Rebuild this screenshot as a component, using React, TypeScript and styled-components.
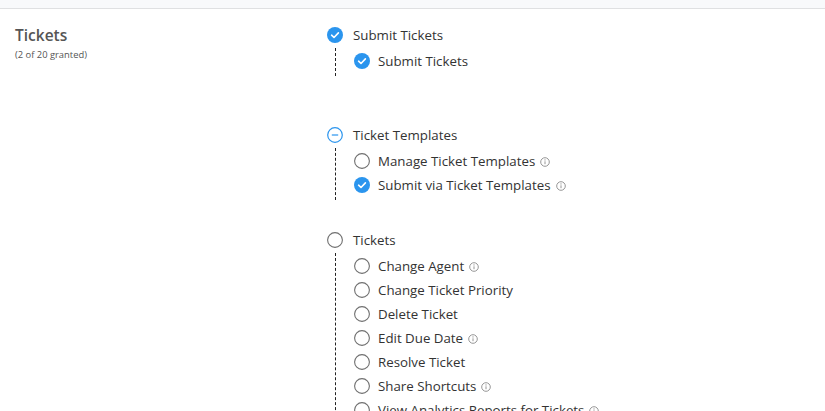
import React from "react";
import styled, { createGlobalStyle } from "styled-components";

type State = "checked" | "unchecked" | "partial";

type Permission = {
  label: string;
  state: State;
  info?: boolean;
};

type Group = {
  label: string;
  state: State;
  gapAfter: number;
  items: Permission[];
};

const groups: Group[] = [
  {
    label: "Submit Tickets",
    state: "checked",
    gapAfter: 49,
    items: [{ label: "Submit Tickets", state: "checked" }],
  },
  {
    label: "Ticket Templates",
    state: "partial",
    gapAfter: 30,
    items: [
      { label: "Manage Ticket Templates", state: "unchecked", info: true },
      { label: "Submit via Ticket Templates", state: "checked", info: true },
    ],
  },
  {
    label: "Tickets",
    state: "unchecked",
    gapAfter: 0,
    items: [
      { label: "Change Agent", state: "unchecked", info: true },
      { label: "Change Ticket Priority", state: "unchecked" },
      { label: "Delete Ticket", state: "unchecked" },
      { label: "Edit Due Date", state: "unchecked", info: true },
      { label: "Resolve Ticket", state: "unchecked" },
      { label: "Share Shortcuts", state: "unchecked", info: true },
      { label: "View Analytics Reports for Tickets", state: "unchecked", info: true },
    ],
  },
];

function Check({ state }: { state: State }) {
  if (state === "checked") {
    return (
      <CheckSvg viewBox="0 0 16 16">
        <circle cx="8" cy="8" r="8" fill="#2b95ee" />
        <path
          d="M4.6 8.2 L7 10.5 L11.4 5.9"
          fill="none"
          stroke="#ffffff"
          strokeWidth="1.6"
          strokeLinecap="round"
          strokeLinejoin="round"
        />
      </CheckSvg>
    );
  }
  if (state === "partial") {
    return (
      <CheckSvg viewBox="0 0 16 16">
        <circle cx="8" cy="8" r="7.3" fill="#ffffff" stroke="#2b95ee" strokeWidth="1.2" />
        <line x1="4.8" y1="8" x2="11.2" y2="8" stroke="#2b95ee" strokeWidth="1.2" />
      </CheckSvg>
    );
  }
  return (
    <CheckSvg viewBox="0 0 16 16">
      <circle cx="8" cy="8" r="7.4" fill="#ffffff" stroke="#6f6f6f" strokeWidth="1.1" />
    </CheckSvg>
  );
}

function InfoIcon() {
  return (
    <InfoSvg viewBox="0 0 10 10">
      <circle cx="5" cy="5" r="4.3" fill="none" stroke="#8a8a8a" strokeWidth="0.9" />
      <line x1="5" y1="4.3" x2="5" y2="7.2" stroke="#8a8a8a" strokeWidth="0.9" />
      <circle cx="5" cy="2.9" r="0.55" fill="#8a8a8a" />
    </InfoSvg>
  );
}

export default function App() {
  return (
    <>
      <GlobalStyle />
      <TopBar />
      <Section>
        <Heading>
          <Title>Tickets</Title>
          <Granted>(2 of 20 granted)</Granted>
        </Heading>
        <Tree>
          {groups.map((group) => (
            <GroupBox key={group.label} gapAfter={group.gapAfter}>
              <ParentRow>
                <Check state={group.state} />
                <Label>{group.label}</Label>
              </ParentRow>
              <Children>
                {group.items.map((item) => (
                  <ChildRow key={item.label}>
                    <Check state={item.state} />
                    <Label>{item.label}</Label>
                    {item.info && <InfoIcon />}
                  </ChildRow>
                ))}
              </Children>
            </GroupBox>
          ))}
        </Tree>
      </Section>
    </>
  );
}

const GlobalStyle = createGlobalStyle`
  html, body {
    margin: 0;
    padding: 0;
    background: #ffffff;
    font-family: "Open Sans", "Noto Sans", sans-serif;
    color: #333333;
    overflow: hidden;
  }
`;

const TopBar = styled.div`
  height: 8px;
  background: #f8f9fb;
  border-bottom: 1px solid #dfe0e2;
`;

const Section = styled.div`
  display: grid;
  grid-template-columns: 312px 1fr;
  padding: 16px 0 0 15px;
`;

const Heading = styled.div`
  display: flex;
  flex-direction: column;
`;

const Title = styled.span`
  font-size: 15.5px;
  font-weight: 600;
  line-height: 20px;
  color: #555555;
`;

const Granted = styled.span`
  font-size: 9.4px;
  line-height: 13px;
  margin-top: 3px;
  color: #555555;
`;

const Tree = styled.div`
  display: flex;
  flex-direction: column;
`;

const GroupBox = styled.div<{ gapAfter: number }>`
  display: flex;
  flex-direction: column;
  margin-bottom: ${({ gapAfter }) => gapAfter}px;
`;

const ParentRow = styled.div`
  display: flex;
  align-items: center;
  gap: 10px;
  height: 20px;
`;

const Children = styled.div`
  display: flex;
  flex-direction: column;
  margin: 3px 0 0 8px;
  padding: 1px 0 3px 18px;
  border-left: 1px dashed #222222;
`;

const ChildRow = styled.div`
  display: flex;
  align-items: center;
  gap: 8px;
  height: 24px;
`;

const CheckSvg = styled.svg`
  width: 16px;
  height: 16px;
  flex-shrink: 0;
`;

const Label = styled.span`
  font-size: 13.3px;
  line-height: 20px;
  color: #333333;
  white-space: nowrap;
`;

const InfoSvg = styled.svg`
  width: 10px;
  height: 10px;
  margin: 2px 0 0 -3px;
  flex-shrink: 0;
`;
